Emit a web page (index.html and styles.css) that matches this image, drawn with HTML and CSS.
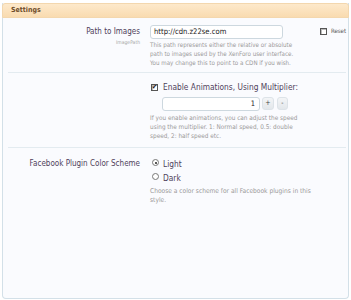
FILE: index.html
```html
<!DOCTYPE html>
<html>
<head>
<meta charset="utf-8">
<link rel="stylesheet" href="styles.css">
</head>
<body>
<div class="frame">
  <div class="head">Settings</div>

  <div class="row r1">
    <div class="lbl">
      <div class="name">Path to Images</div>
      <div class="hint">ImagePath</div>
    </div>
    <div class="ctl">
      <div class="line">
        <div class="text">http://cdn.z22se.com</div>
        <div class="reset"><span class="cb"></span>Reset</div>
      </div>
      <p class="desc">This path represents either the relative or absolute<br>path to images used by the XenForo user interface.<br>You may change this to point to a CDN if you wish.</p>
    </div>
  </div>

  <div class="row r2">
    <div class="lbl"></div>
    <div class="ctl">
      <div class="opt"><span class="cb on">&#10004;</span>Enable Animations, Using Multiplier:</div>
      <div class="spin">
        <div class="num">1</div>
        <div class="btn">+</div>
        <div class="btn minus">-</div>
      </div>
      <p class="desc">If you enable animations, you can adjust the speed<br>using the multiplier. 1: Normal speed, 0.5: double<br>speed, 2: half speed etc.</p>
    </div>
  </div>

  <div class="row r3">
    <div class="lbl">
      <div class="name">Facebook Plugin Color Scheme</div>
    </div>
    <div class="ctl">
      <div class="opt radio-line"><span class="rd on"></span>Light</div>
      <div class="opt radio-line"><span class="rd"></span>Dark</div>
      <p class="desc wide">Choose a color scheme for all Facebook plugins in this<br>style.</p>
    </div>
  </div>
</div>
</body>
</html>
```

FILE: styles.css
```css
body {
  margin: 0;
  background: #ffffff;
  font-family: "DejaVu Sans Condensed", "DejaVu Sans", sans-serif;
}

.frame {
  margin: 3px 2px 0 2px;
  height: 296px;
  box-sizing: border-box;
  border: 1px solid #d3e0e8;
  border-top: none;
  border-radius: 0 0 4px 4px;
  background: #fafbfe;
}

.head {
  height: 15px;
  box-sizing: border-box;
  margin: 0 -1px;
  padding-left: 8px;
  background: linear-gradient(#fde9cb, #f9dbb0);
  border: 1px solid #f3d7ae;
  border-radius: 3px 3px 0 0;
  font-size: 7px;
  font-weight: bold;
  line-height: 13px;
  color: #6e4d2b;
}

.row {
  display: grid;
  grid-template-columns: 132px 1fr;
  column-gap: 10px;
  margin: 0 2px 0 5px;
  border-bottom: 1px solid #e3ebf0;
}

.lbl {
  text-align: right;
}

.name {
  font-size: 8px;
  line-height: 14px;
  color: #4f3f5b;
}

.hint {
  font-size: 5px;
  line-height: 6px;
  color: #a6a6a6;
}

.desc {
  margin: 1px 0 0 0;
  font-size: 6.2px;
  line-height: 9px;
  color: #9a9a9a;
}

.r1 {
  padding: 7px 0 5px 0;
}

.line {
  display: flex;
  align-items: flex-start;
}

.text {
  width: 133px;
  height: 14px;
  box-sizing: border-box;
  border: 1px solid #cdd8df;
  border-radius: 3px;
  background: #ffffff;
  padding-left: 3px;
  font-size: 7.6px;
  line-height: 12px;
  color: #222;
}

.reset {
  margin-left: auto;
  margin-top: 2px;
  display: flex;
  align-items: center;
  gap: 4px;
  font-size: 6px;
  line-height: 8px;
  color: #555;
}

.cb {
  display: inline-block;
  width: 7px;
  height: 7px;
  box-sizing: border-box;
  border: 1px solid #555;
  background: #fff;
  box-shadow: inset 1px 1px 0 #bbb;
}

.cb.on {
  font-size: 7px;
  line-height: 5px;
  text-align: center;
  color: #111;
  overflow: hidden;
}

.r2 {
  padding: 8px 0 6px 0;
}

.opt {
  display: flex;
  align-items: center;
  font-size: 8.3px;
  line-height: 13px;
  color: #4f3f5b;
}

.opt .cb {
  margin: 0 5px 0 1px;
}

.spin {
  display: flex;
  align-items: flex-start;
  margin: 3px 0 0 12px;
}

.num {
  width: 98px;
  height: 14px;
  box-sizing: border-box;
  border: 1px solid #cdd8df;
  border-radius: 3px;
  background: #fff;
  padding-right: 4px;
  text-align: right;
  font-size: 7.5px;
  line-height: 12px;
  color: #222;
}

.btn {
  width: 12px;
  height: 13px;
  margin-left: 2px;
  box-sizing: border-box;
  border: 1px solid #dde3e8;
  border-radius: 3px;
  background: linear-gradient(#f3f5f7, #e3e7eb);
  text-align: center;
  font-size: 7px;
  line-height: 11px;
  color: #444;
}

.btn.minus {
  width: 11px;
  margin-left: 3px;
}

.r2 .desc {
  margin-top: 3px;
  font-size: 6.4px;
}

.r3 {
  border-bottom: none;
  padding-top: 9px;
}

.radio-line {
  line-height: 14px;
}

.rd {
  display: inline-block;
  width: 7px;
  height: 7px;
  box-sizing: border-box;
  margin: -3px 4px 0 2px;
  border: 1px solid #777;
  border-radius: 50%;
  background: #fff;
  position: relative;
}

.rd.on::after {
  content: "";
  position: absolute;
  left: 1.5px;
  top: 1.5px;
  width: 2px;
  height: 2px;
  border-radius: 50%;
  background: #222;
}

.r3 .desc {
  margin-top: 2px;
  font-size: 6.6px;
}
```
